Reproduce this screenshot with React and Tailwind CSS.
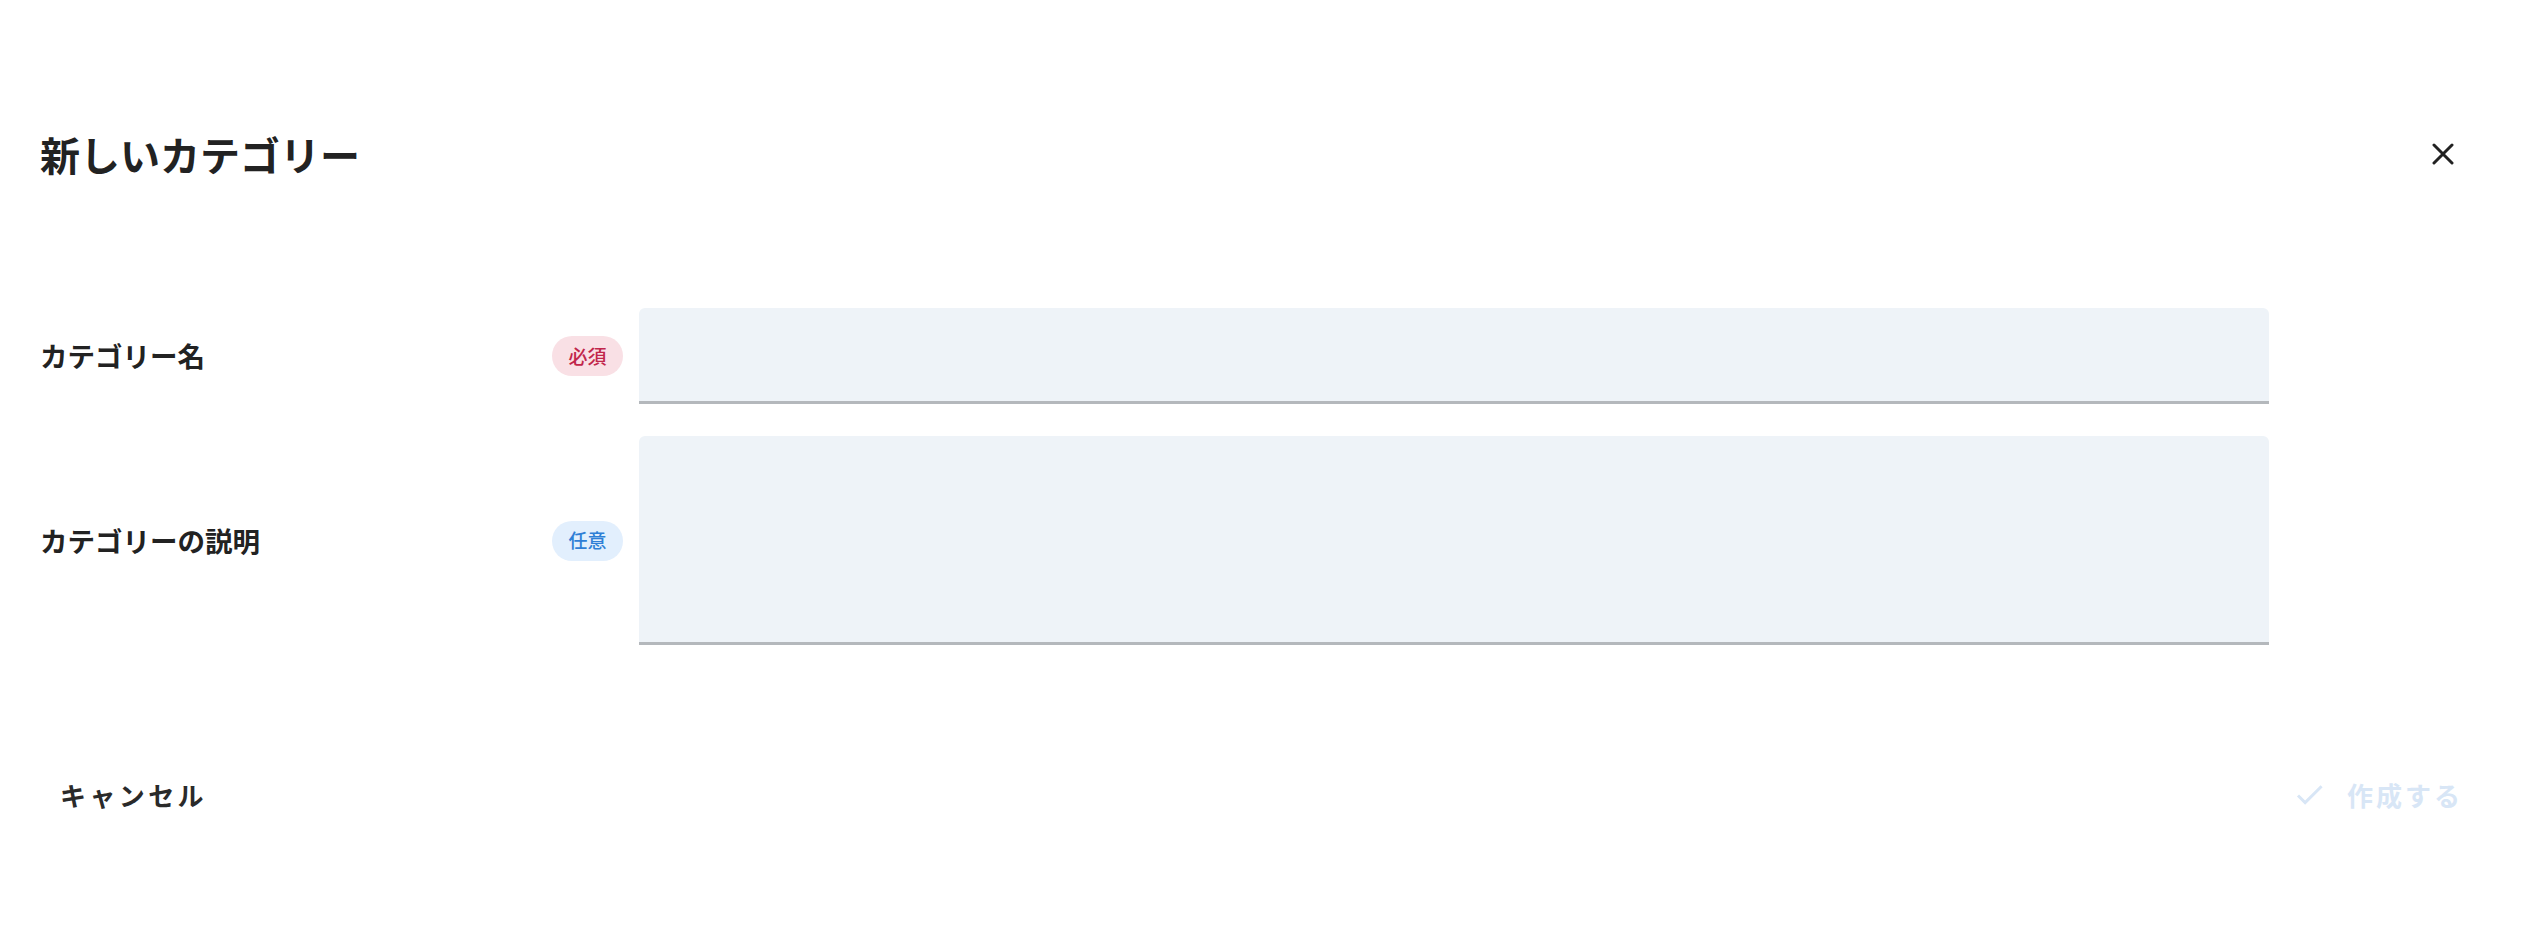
import React from "react";

const font = { fontFamily: '"Noto Sans CJK JP", "Noto Sans", sans-serif' };

function Badge({ children, tone }) {
  const cls =
    tone === "red"
      ? "bg-[#f9e0e5] text-[#c1264b]"
      : "bg-[#e2effd] text-[#2f7fd6]";
  return (
    <span
      className={`inline-flex h-[40px] w-[71px] items-center justify-center rounded-full text-[19px] font-medium ${cls}`}
    >
      {children}
    </span>
  );
}

export default function App() {
  return (
    <div
      className="w-[2529px] h-[950px] bg-white text-[#222222] overflow-hidden"
      style={font}
    >
      <header className="mt-[104px] flex h-[100px] items-center justify-between pl-[40px] pr-[66px]">
        <h1 className="text-[40px] font-bold leading-none">新しいカテゴリー</h1>
        <button className="flex h-[40px] w-[40px] items-center justify-center">
          <svg width="22" height="22" viewBox="0 0 22 22" fill="none">
            <path
              d="M2 2 L20 20 M20 2 L2 20"
              stroke="#222222"
              strokeWidth="3"
              strokeLinecap="round"
            />
          </svg>
        </button>
      </header>

      <form className="mt-[104px] flex flex-col gap-[32px] pl-[40px]">
        <div className="flex items-center">
          <div className="flex w-[599px] items-center justify-between pr-[16px]">
            <span className="text-[27.5px] font-bold leading-none">カテゴリー名</span>
            <Badge tone="red">必須</Badge>
          </div>
          <div className="h-[96px] w-[1630px] rounded-t-[6px] border-b-[3px] border-[#b4b8bc] bg-[#eef3f8]" />
        </div>
        <div className="flex items-center">
          <div className="flex w-[599px] items-center justify-between pr-[16px]">
            <span className="text-[27.5px] font-bold leading-none">カテゴリーの説明</span>
            <Badge tone="blue">任意</Badge>
          </div>
          <div className="h-[209px] w-[1630px] rounded-t-[6px] border-b-[3px] border-[#b4b8bc] bg-[#eef3f8]" />
        </div>
      </form>

      <footer className="mt-[104px] flex h-[90px] items-center justify-between pl-[40px] pr-[46px]">
        <button className="flex h-[64px] items-center px-[20px] text-[26px] font-bold tracking-[3.4px] text-[#2a2a2a]">
          キャンセル
        </button>
        <button className="flex h-[64px] items-center gap-[20px] px-[20px] text-[26px] font-bold tracking-[3px] text-[#d8e6f6]">
          <svg width="35" height="35" viewBox="0 0 24 24">
            <path
              d="M9 16.17 4.83 12l-1.42 1.41L9 19 21 7l-1.41-1.41z"
              fill="#d8e6f6"
            />
          </svg>
          <span>作成する</span>
        </button>
      </footer>
    </div>
  );
}
